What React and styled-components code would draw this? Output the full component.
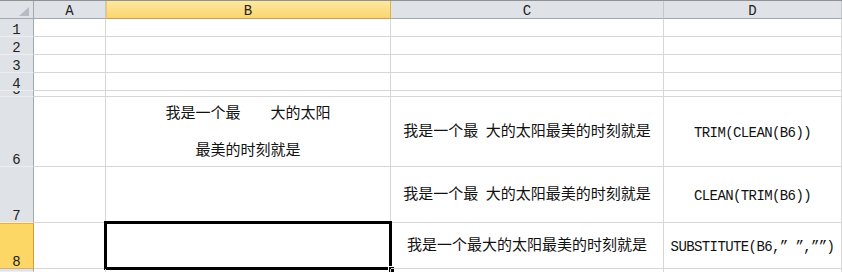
import React from "react";
import styled, { createGlobalStyle } from "styled-components";

const GlobalStyle = createGlobalStyle`
  html, body {
    margin: 0;
    padding: 0;
    background: #ffffff;
  }
  body {
    width: 842px;
    height: 272px;
    overflow: hidden;
    font-family: "Noto Sans CJK SC", sans-serif;
    color: #111111;
  }
`;

// column widths include the right grid line
const COLS = [
  { key: "A", width: 72 },
  { key: "B", width: 285 },
  { key: "C", width: 273 },
  { key: "D", width: 178 },
];

// row heights include the bottom grid line; row 9 is only peeking in at the bottom
const ROWS = [
  { n: 1, height: 18 },
  { n: 2, height: 18 },
  { n: 3, height: 18 },
  { n: 4, height: 18 },
  { n: 5, height: 6 },
  { n: 6, height: 70 },
  { n: 7, height: 56 },
  { n: 8, height: 46 },
  { n: 9, height: 3, hideLabel: true },
];

const SENTENCE = "我是一个最 大的太阳最美的时刻就是";

const CELLS = {
  B6: { kind: "lines", lines: ["我是一个最　　大的太阳", "最美的时刻就是"] },
  C6: { kind: "text", value: SENTENCE },
  D6: { kind: "formula", value: "TRIM(CLEAN(B6))" },
  C7: { kind: "text", value: SENTENCE },
  D7: { kind: "formula", value: "CLEAN(TRIM(B6))" },
  C8: { kind: "text", value: "我是一个最大的太阳最美的时刻就是" },
  D8: { kind: "formula", value: "SUBSTITUTE(B6,” ”,””)" },
};

const ACTIVE_COL = "B";
const ACTIVE_ROW = 8;

const App = () => {
  return (
    <>
      <GlobalStyle />
      <Sheet
        $cols={COLS.map((c) => `${c.width}px`).join(" ")}
        $rows={ROWS.map((r) => `${r.height}px`).join(" ")}
      >
        <Corner>
          <svg width="10" height="9" viewBox="0 0 10 9">
            <polygon points="10,0 10,9 0,9" fill="#b7bcc4" />
          </svg>
        </Corner>
        {COLS.map((c) => (
          <ColHeader key={c.key} $active={c.key === ACTIVE_COL}>
            {c.key}
          </ColHeader>
        ))}
        {ROWS.map((r) => (
          <React.Fragment key={r.n}>
            <RowHeader $active={r.n === ACTIVE_ROW}>
              {!r.hideLabel && <span>{r.n}</span>}
            </RowHeader>
            {COLS.map((c) => {
              const id = `${c.key}${r.n}`;
              const cell = CELLS[id];
              const selected = id === `${ACTIVE_COL}${ACTIVE_ROW}`;
              return (
                <Cell key={id}>
                  {cell && cell.kind === "lines" && (
                    <Lines>
                      {cell.lines.map((line) => (
                        <TextLine key={line}>{line}</TextLine>
                      ))}
                    </Lines>
                  )}
                  {cell && cell.kind === "text" && <TextLine>{cell.value}</TextLine>}
                  {cell && cell.kind === "formula" && (
                    <Formula>{cell.value}</Formula>
                  )}
                  {selected && (
                    <Selection>
                      <FillHandle />
                    </Selection>
                  )}
                </Cell>
              );
            })}
          </React.Fragment>
        ))}
      </Sheet>
    </>
  );
};

export default App;

const Sheet = styled.div`
  display: grid;
  grid-template-columns: 34px ${(p) => p.$cols};
  grid-template-rows: 18px ${(p) => p.$rows};
  border-top: 1px solid #8e9297;
  width: 842px;
`;

const HeaderBase = styled.div`
  box-sizing: border-box;
  display: flex;
  justify-content: center;
  font-family: "Liberation Mono", monospace;
  font-size: 14px;
  color: #222222;
  overflow: hidden;
`;

const Corner = styled(HeaderBase)`
  background: #dfe3e8;
  border-right: 1px solid #a2a8b0;
  border-bottom: 1px solid #a2a8b0;
  justify-content: flex-end;
  align-items: flex-end;
  padding: 0 4px 2px 0;
`;

const ColHeader = styled(HeaderBase)`
  align-items: center;
  padding-top: 2px;
  line-height: 14px;
  background: ${(p) =>
    p.$active ? "linear-gradient(#fde8a2, #f9d66e)" : "#dfe3e8"};
  border-right: 1px solid ${(p) => (p.$active ? "#e4b04a" : "#c3c8ce")};
  border-bottom: 1px solid ${(p) => (p.$active ? "#e29a2a" : "#a2a8b0")};
  box-shadow: ${(p) => (p.$active ? "inset 1px 0 0 #f1c964" : "none")};
`;

const RowHeader = styled(HeaderBase)`
  align-items: flex-end;
  line-height: 12px;
  background: ${(p) => (p.$active ? "#fdd766" : "#dfe3e8")};
  border-right: 1px solid ${(p) => (p.$active ? "#e29a2a" : "#a2a8b0")};
  border-bottom: 1px solid ${(p) => (p.$active ? "#e4b04a" : "#eceef1")};
  box-shadow: ${(p) => (p.$active ? "inset 0 1px 0 #e4b04a" : "none")};
`;

const Cell = styled.div`
  position: relative;
  box-sizing: border-box;
  display: flex;
  align-items: center;
  justify-content: center;
  padding-top: 3px;
  border-right: 1px solid #d6d6d6;
  border-bottom: 1px solid #d6d6d6;
  min-width: 0;
`;

const Lines = styled.div`
  display: flex;
  flex-direction: column;
  align-items: center;
  gap: 19px;
`;

const TextLine = styled.span`
  font-family: "Liberation Mono", "Noto Sans CJK SC", monospace;
  font-size: 15px;
  line-height: 18px;
  word-spacing: -1.5px;
  white-space: pre;
  color: #111111;
`;

const Formula = styled.span`
  font-family: "Liberation Mono", monospace;
  font-size: 14px;
  line-height: 16px;
  letter-spacing: -0.6px;
  white-space: pre;
  color: #111111;
`;

const Selection = styled.div`
  position: absolute;
  top: -2px;
  left: -2px;
  right: -2px;
  bottom: -2px;
  border: 3px solid #000000;
  pointer-events: none;
`;

const FillHandle = styled.div`
  position: absolute;
  right: -6px;
  bottom: -6px;
  width: 5px;
  height: 5px;
  background: #000000;
  border: 1px solid #ffffff;
`;
